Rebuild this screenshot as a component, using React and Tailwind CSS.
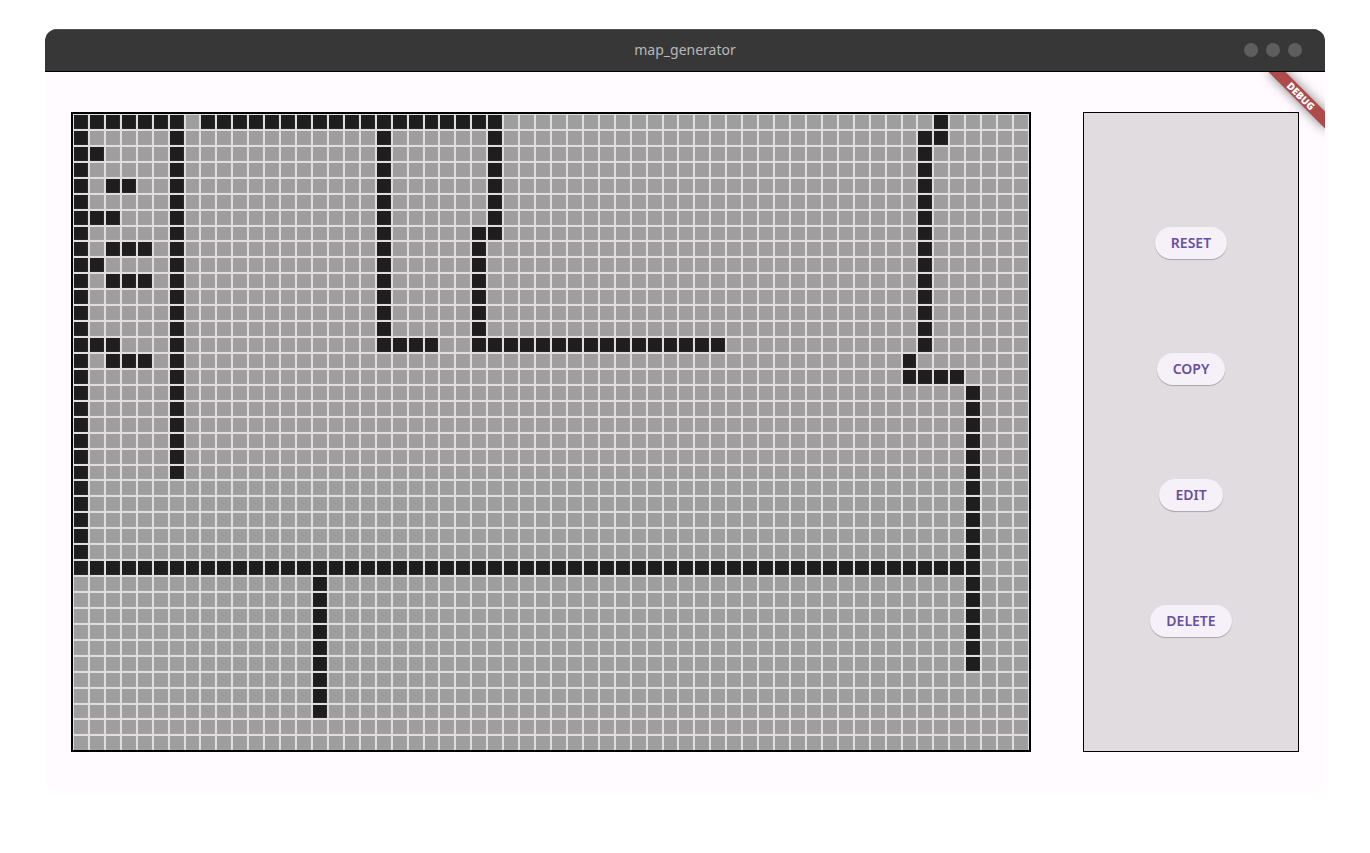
const COLS = 60;
const ROWS = 40;

// Walls as [firstRow, firstColumn, lastRow, lastColumn], all inclusive.
const WALLS = [
  [0, 0, 0, 6],
  [0, 8, 0, 26],
  [0, 54, 1, 54],
  [0, 0, 28, 0],
  [2, 1, 2, 1],
  [4, 2, 4, 3],
  [6, 1, 6, 2],
  [8, 2, 8, 4],
  [9, 1, 9, 1],
  [10, 2, 10, 4],
  [14, 1, 14, 2],
  [15, 2, 15, 4],
  [1, 6, 22, 6],
  [1, 19, 14, 19],
  [14, 20, 14, 22],
  [1, 26, 7, 26],
  [7, 25, 14, 25],
  [14, 26, 14, 40],
  [1, 53, 14, 53],
  [15, 52, 15, 52],
  [16, 52, 16, 55],
  [17, 56, 34, 56],
  [28, 0, 28, 56],
  [29, 15, 37, 15],
];

const cells = Array(ROWS * COLS).fill(false);
for (const [r0, c0, r1, c1] of WALLS) {
  for (let r = r0; r <= r1; r++) {
    for (let c = c0; c <= c1; c++) cells[r * COLS + c] = true;
  }
}

const ACTIONS = ["RESET", "COPY", "EDIT", "DELETE"];

function TitleBar() {
  return (
    <header className="grid h-[43px] grid-cols-[1fr_auto_1fr] items-center border-t border-b border-t-[#505050] border-b-black bg-[#373737] px-[23px] pb-0.5">
      <h1 className="col-start-2 text-sm text-[#b8b8b8]">map_generator</h1>
      <div className="flex justify-end gap-2">
        <button aria-label="Minimize" className="size-3.5 rounded-full bg-[#5e5e5e]" />
        <button aria-label="Maximize" className="size-3.5 rounded-full bg-[#5e5e5e]" />
        <button aria-label="Close" className="size-3.5 rounded-full bg-[#5e5e5e]" />
      </div>
    </header>
  );
}

function Board() {
  return (
    <section
      aria-label="Map"
      className="aspect-[3/2] w-3/4 overflow-hidden border-2 border-black bg-[#e1dce0]"
    >
      <div className="grid aspect-[3/2] grid-cols-[repeat(60,minmax(0,1fr))] grid-rows-[repeat(40,minmax(0,1fr))]">
        {cells.map((wall, i) => (
          <div key={i} className="p-px">
            <div
              className={
                wall
                  ? "h-full border-r border-b border-[#292829] bg-[#1e1e1e]"
                  : "h-full border-r border-b border-[#a3a2a3] bg-[#9e9e9e]"
              }
            />
          </div>
        ))}
      </div>
    </section>
  );
}

function Sidebar() {
  return (
    <aside className="flex w-[216px] flex-col items-center justify-center gap-[94px] border border-black bg-[#e1dce0]">
      {ACTIONS.map((label) => (
        <button
          key={label}
          className="h-8 rounded-full bg-[#f6f1f9] px-4 text-sm font-semibold text-[#6750a4] shadow-[0_1px_1px_rgba(0,0,0,0.25)]"
        >
          {label}
        </button>
      ))}
    </aside>
  );
}

export default function App() {
  return (
    <div className="min-h-screen bg-white px-[45px] pt-[29px] font-['Noto_Sans',sans-serif]">
      <div className="overflow-hidden rounded-xl bg-[#fffbff]">
        <TitleBar />
        <main className="relative flex justify-around overflow-hidden py-10">
          <Board />
          <Sidebar />
          <div className="absolute top-[18px] -right-4 flex h-3 w-20 rotate-45 items-center justify-center bg-[#ad4a4a] text-[10px] leading-3 font-black text-white shadow-[0_0_12px_rgba(0,0,0,0.5)]">
            DEBUG
          </div>
        </main>
      </div>
    </div>
  );
}
